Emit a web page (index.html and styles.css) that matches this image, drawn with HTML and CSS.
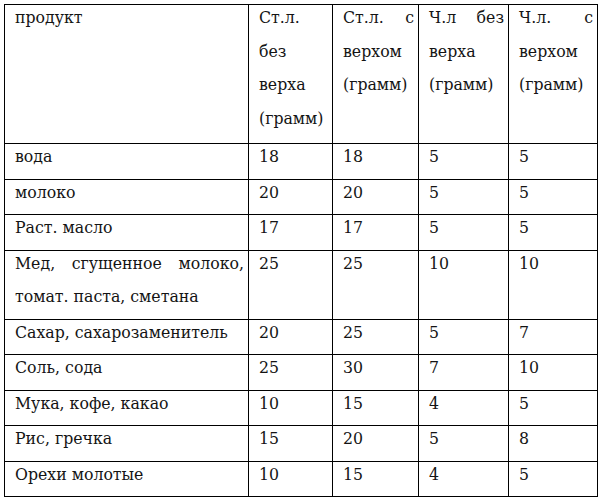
FILE: index.html
```html
<!DOCTYPE html>
<html lang="ru">
<head>
<meta charset="utf-8">
<title>Таблица мер</title>
<link rel="stylesheet" href="styles.css">
</head>
<body>
<table class="measures">
  <colgroup>
    <col class="c-name">
    <col class="c-a">
    <col class="c-b">
    <col class="c-c">
    <col class="c-d">
  </colgroup>
  <tr class="head">
    <td><div class="t">продукт</div></td>
    <td><div class="t">Ст.л. без верха (грамм)</div></td>
    <td><div class="t">Ст.л. с верхом (грамм)</div></td>
    <td><div class="t">Ч.л без верха (грамм)</div></td>
    <td><div class="t">Ч.л. с верхом (грамм)</div></td>
  </tr>
  <tr><td><div class="t">вода</div></td><td><div class="t">18</div></td><td><div class="t">18</div></td><td><div class="t">5</div></td><td><div class="t">5</div></td></tr>
  <tr><td><div class="t">молоко</div></td><td><div class="t">20</div></td><td><div class="t">20</div></td><td><div class="t">5</div></td><td><div class="t">5</div></td></tr>
  <tr><td><div class="t">Раст. масло</div></td><td><div class="t">17</div></td><td><div class="t">17</div></td><td><div class="t">5</div></td><td><div class="t">5</div></td></tr>
  <tr><td><div class="t">Мед, сгущенное молоко, томат. паста, сметана</div></td><td><div class="t">25</div></td><td><div class="t">25</div></td><td><div class="t">10</div></td><td><div class="t">10</div></td></tr>
  <tr><td><div class="t">Сахар, сахарозаменитель</div></td><td><div class="t">20</div></td><td><div class="t">25</div></td><td><div class="t">5</div></td><td><div class="t">7</div></td></tr>
  <tr><td><div class="t">Соль, сода</div></td><td><div class="t">25</div></td><td><div class="t">30</div></td><td><div class="t">7</div></td><td><div class="t">10</div></td></tr>
  <tr><td><div class="t">Мука, кофе, какао</div></td><td><div class="t">10</div></td><td><div class="t">15</div></td><td><div class="t">4</div></td><td><div class="t">5</div></td></tr>
  <tr><td><div class="t">Рис, гречка</div></td><td><div class="t">15</div></td><td><div class="t">20</div></td><td><div class="t">5</div></td><td><div class="t">8</div></td></tr>
  <tr><td><div class="t">Орехи молотые</div></td><td><div class="t">10</div></td><td><div class="t">15</div></td><td><div class="t">4</div></td><td><div class="t">5</div></td></tr>
</table>
</body>
</html>
```

FILE: styles.css
```css
html, body {
  margin: 0;
  padding: 0;
  background: #ffffff;
}

body {
  padding: 4px 0 0 4px;
  font-family: "DejaVu Serif Condensed", "DejaVu Serif", serif;
  font-stretch: condensed;
  font-size: 17.5px;
  color: #141414;
}

.measures {
  border-collapse: collapse;
  table-layout: fixed;
  width: 593px;
}

.c-name { width: 244px; }
.c-a { width: 84px; }
.c-b { width: 86px; }
.c-c { width: 90px; }
.c-d { width: 89px; }

.measures td {
  border: 1px solid #000000;
  padding: 0 4px 5px 10px;
  vertical-align: top;
  text-align: justify;
  line-height: 33.5px;
}

.measures .t {
  margin-top: -4px;
}

.head td {
  height: 133px;
}
```
